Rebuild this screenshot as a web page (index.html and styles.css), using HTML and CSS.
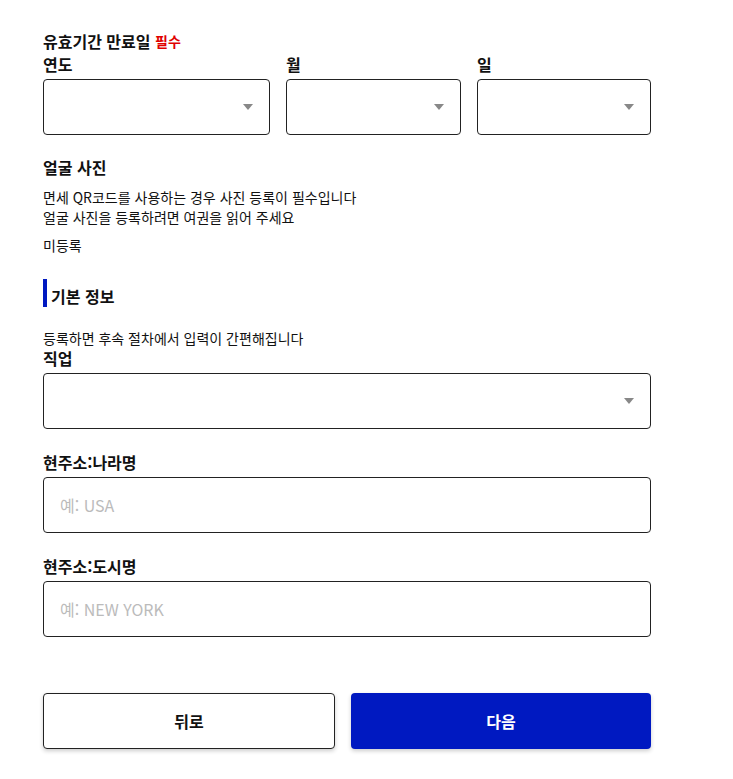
FILE: index.html
```html
<!DOCTYPE html>
<html lang="ko">
<head>
    <meta charset="UTF-8">
    <meta name="viewport" content="width=device-width, initial-scale=1.0">
    <title>여권 정보 입력</title>
    <link rel="stylesheet" href="styles.css">
</head>
<body>
    <div class="container">
        <h4 class="title">유효기간 만료일 <span class="required">필수</span></h4>

        <div class="date-row">
            <div class="field">
                <label class="label">연도</label>
                <div class="select"><span class="arrow"></span></div>
            </div>
            <div class="field">
                <label class="label">월</label>
                <div class="select"><span class="arrow"></span></div>
            </div>
            <div class="field">
                <label class="label">일</label>
                <div class="select"><span class="arrow"></span></div>
            </div>
        </div>

        <div class="photo">
            <h4 class="title">얼굴 사진</h4>
            <p class="desc">면세 QR코드를 사용하는 경우 사진 등록이 필수입니다<br>얼굴 사진을 등록하려면 여권을 읽어 주세요</p>
            <p class="status">미등록</p>
        </div>

        <h3 class="section">기본 정보</h3>
        <p class="note">등록하면 후속 절차에서 입력이 간편해집니다</p>

        <div class="field">
            <label class="label">직업</label>
            <div class="select"><span class="arrow"></span></div>
        </div>

        <div class="field gap">
            <label class="label" for="country">현주소:나라명</label>
            <input class="input" id="country" type="text" placeholder="예: USA">
        </div>

        <div class="field gap">
            <label class="label" for="city">현주소:도시명</label>
            <input class="input" id="city" type="text" placeholder="예: NEW YORK">
        </div>

        <div class="buttons">
            <button class="btn back">뒤로</button>
            <button class="btn next">다음</button>
        </div>
    </div>
</body>
</html>
```

FILE: styles.css
```css
:root {
    --primary-color: #0019c1;
    --text-color: #111;
    --border-color: #222;
    --border-radius: 4px;
}

body {
    font-family: "Noto Sans CJK KR", "Noto Sans", sans-serif;
    background-color: #fff;
    color: var(--text-color);
    margin: 0;
    padding: 0;
}

.container {
    width: 608px;
    padding: 30px 0 30px 43px;
}

.title {
    margin: 0;
    font-size: 16px;
    font-weight: 700;
    line-height: 22px;
}

.required {
    color: #e00000;
    font-size: 14px;
    vertical-align: top;
}

.label {
    display: block;
    font-size: 16px;
    font-weight: 700;
    line-height: 22px;
    margin-bottom: 4px;
}

.date-row {
    display: grid;
    grid-template-columns: 227px 175px 174px;
    gap: 16px;
    margin-top: 1px;
}

.select {
    height: 56px;
    box-sizing: border-box;
    border: 1px solid var(--border-color);
    border-radius: var(--border-radius);
    display: flex;
    align-items: center;
    justify-content: flex-end;
    padding-right: 16px;
}

.arrow {
    width: 0;
    height: 0;
    border-left: 5px solid transparent;
    border-right: 5px solid transparent;
    border-top: 6px solid #888;
}

.photo {
    margin-top: 21px;
}

.desc {
    margin: 9px 0 0;
    font-size: 14px;
    line-height: 20px;
}

.status {
    margin: 8px 0 0;
    font-size: 14px;
    line-height: 20px;
}

.section {
    margin: 24px 0 0;
    border-left: 4px solid var(--primary-color);
    padding: 6px 0 0 4px;
    font-size: 16px;
    font-weight: 700;
    line-height: 22px;
}

.note {
    margin: 22px 0 0;
    font-size: 14px;
    line-height: 18px;
}

.gap {
    margin-top: 22px;
}

.input {
    display: block;
    width: 100%;
    height: 56px;
    box-sizing: border-box;
    border: 1px solid var(--border-color);
    border-radius: var(--border-radius);
    padding: 0 16px;
    font-family: inherit;
    font-size: 16px;
    color: var(--text-color);
    outline: none;
}

.input::placeholder {
    color: #bbb;
}

.buttons {
    display: flex;
    gap: 16px;
    margin-top: 56px;
}

.btn {
    height: 56px;
    border-radius: var(--border-radius);
    font-family: inherit;
    font-size: 16px;
    font-weight: 700;
    cursor: pointer;
    box-shadow: 0 2px 4px rgba(0, 0, 0, 0.2);
}

.back {
    width: 292px;
    background: #fff;
    border: 1px solid var(--border-color);
    color: var(--text-color);
}

.next {
    width: 300px;
    background: var(--primary-color);
    border: none;
    color: #fff;
}
```
